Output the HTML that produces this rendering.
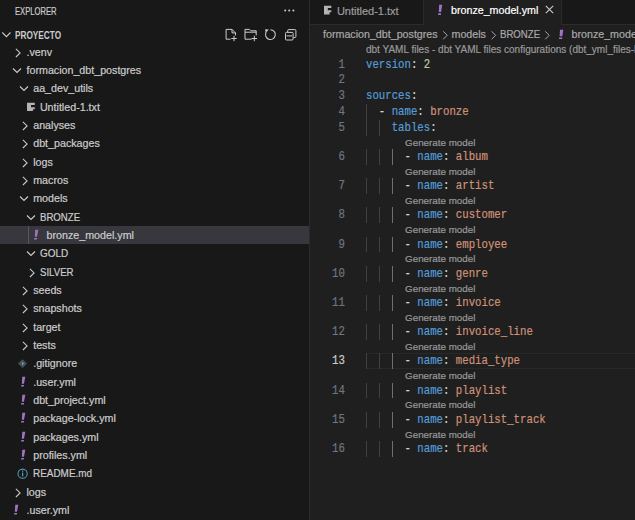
<!DOCTYPE html>
<html><head><meta charset="utf-8">
<style>
*{margin:0;padding:0;box-sizing:border-box}
html,body{width:635px;height:520px;overflow:hidden;background:#1f1f1f;font-family:"Liberation Sans",sans-serif;}
.lbl,.tabtxt,#bc,.bct,.title,.lens,.code,.ln{-webkit-text-stroke:0.2px currentColor}
.abs{position:absolute}
#side{position:absolute;left:0;top:0;width:309px;height:520px;background:#181818;}
#sideb{position:absolute;left:309px;top:0;width:1px;height:520px;background:#2b2b2b;}
.title{position:absolute;left:14.9px;top:4.6px;font-size:10.3px;color:#cccccc;line-height:14px;transform:scaleX(0.74);transform-origin:0 0}
.hdr{position:absolute;left:15px;top:28.7px;font-size:10.3px;font-weight:bold;color:#cccccc;line-height:14px;transform:scaleX(0.80);transform-origin:0 0}
.row{position:absolute;left:0;width:309px;height:18.33px;}
.row.sel{background:#37373d}
.lbl{position:absolute;top:0;font-size:10.7px;line-height:18.33px;color:#cccccc;white-space:nowrap}
.ic{position:absolute;top:0}
.bang{position:absolute;top:0;width:6px;text-align:center;font-size:11px;line-height:18.33px;font-weight:bold;font-style:italic;color:#a074c4}
.tguide{position:absolute;left:28px;top:0;width:1px;height:18.33px;background:#585858}
#tabs{position:absolute;left:310px;top:0;width:325px;height:24px;background:#181818;}
#tabsb{position:absolute;left:310px;top:24px;width:325px;height:1px;background:#2b2b2b;}
.tab{position:absolute;top:0;height:24px;}
.tabtxt{position:absolute;top:0;font-size:10.7px;line-height:21px;white-space:nowrap}
#bc,.bct{position:absolute;left:323px;top:25px;font-size:10.7px;line-height:18px;color:#a9a9a9;white-space:nowrap}
.lens{position:absolute;font-size:9.8px;line-height:13.36px;color:#999999;white-space:nowrap}
.ln{position:absolute;left:310px;width:34.8px;text-align:right;font-family:"Liberation Mono",monospace;font-size:11.85px;line-height:15.83px;color:#6e7681;transform:translateY(1px) scaleX(0.903);transform-origin:100% 0}
.ln.act{color:#cccccc}
.code{position:absolute;left:366.4px;font-family:"Liberation Mono",monospace;font-size:11.85px;line-height:15.83px;white-space:pre;color:#d4d4d4;transform:translateY(1px) scaleX(0.903);transform-origin:0 0}
.k{color:#569cd6} .s{color:#ce9178} .n{color:#b5cea8} .p{color:#d4d4d4}
.ig{position:absolute;width:1px;height:15.83px;background:#404040}
.ig.a{background:#707070}
.hl{position:absolute;left:366px;width:270px;height:15.83px;border:1px solid #282828;border-right:none}
</style></head><body>
<div id="side">
 <div class="title">EXPLORER</div>
 <svg class="abs" style="left:283px;top:8px" width="13" height="5" viewBox="0 0 13 5"><circle cx="2.2" cy="2.4" r="1" fill="#cccccc"/><circle cx="6.2" cy="2.4" r="1" fill="#cccccc"/><circle cx="10.4" cy="2.4" r="1" fill="#cccccc"/></svg>
 <svg class="abs" style="left:2px;top:30px" width="10" height="9" viewBox="0 0 10 9"><path d="M0.3 2.5 L4.4 6.6 L8.5 2.5" fill="none" stroke="#cccccc" stroke-width="1.1"/></svg>
 <div class="hdr">PROYECTO</div>
 <!-- action icons -->
 <svg class="abs" style="left:222px;top:25px" width="76" height="19" viewBox="0 0 76 19" fill="none" stroke="#cccccc" stroke-width="1">
   <path d="M8.6 14.2H4.1V4.4H10L13.5 7.9V10.4"/><path d="M10 4.4V7.9H13.5"/><path d="M12 10.8V16.2M9.3 13.5H14.7"/>
   <path d="M29.6 14.2H23V4.4H27.6L29 5.8H34.2V10.4"/><path d="M23 7.2H34.2"/><path d="M32.3 10.8V16.2M29.6 13.5H35"/>
   <path d="M10.4 4.7A4.9 4.9 0 1 1 6.16 7.15" transform="translate(38,0)" stroke-width="1.05"/>
   <path d="M43.2 4.3L46.8 4.6L43.6 7.9z" fill="#cccccc" stroke="none"/>
   <path d="M65.7 7.1V5.6A1 1 0 0 1 66.7 4.6H72.9A1 1 0 0 1 73.9 5.6V11.5A1 1 0 0 1 72.9 12.5H71.3"/>
   <rect x="63.5" y="7.4" width="7.6" height="7.6" rx="1"/><path d="M64.5 10.9H70.1"/>
 </svg>
<div class="row" style="top:42.80px"><svg class="ic" style="left:14.10px" width="8" height="18" viewBox="0 0 8 18"><path d="M1.9 5.9 L6.1 9.95 L1.9 14.0" fill="none" stroke="#cccccc" stroke-width="1.05"/></svg><span class="lbl" style="left:26.50px">.venv</span></div>
<div class="row" style="top:61.13px"><svg class="ic" style="left:12.40px" width="10" height="18" viewBox="0 0 10 18"><path d="M1 7.5 L5 11.5 L9 7.5" fill="none" stroke="#cccccc" stroke-width="1.1"/></svg><span class="lbl" style="left:26.50px">formacion_dbt_postgres</span></div>
<div class="row" style="top:79.46px"><svg class="ic" style="left:19.10px" width="10" height="18" viewBox="0 0 10 18"><path d="M1 7.5 L5 11.5 L9 7.5" fill="none" stroke="#cccccc" stroke-width="1.1"/></svg><span class="lbl" style="left:33.20px">aa_dev_utils</span></div>
<div class="row" style="top:97.79px"><svg class="ic" style="left:27.1px" width="8" height="18" viewBox="0 0 8 18"><path d="M0 4.8H7.8V6.9H4V9.2H7.8V11.2H5.9V13H0z" fill="#b4b4b4"/></svg><span class="lbl" style="left:39.90px">Untitled-1.txt</span></div>
<div class="row" style="top:116.12px"><svg class="ic" style="left:20.80px" width="8" height="18" viewBox="0 0 8 18"><path d="M1.9 5.9 L6.1 9.95 L1.9 14.0" fill="none" stroke="#cccccc" stroke-width="1.05"/></svg><span class="lbl" style="left:33.20px">analyses</span></div>
<div class="row" style="top:134.45px"><svg class="ic" style="left:20.80px" width="8" height="18" viewBox="0 0 8 18"><path d="M1.9 5.9 L6.1 9.95 L1.9 14.0" fill="none" stroke="#cccccc" stroke-width="1.05"/></svg><span class="lbl" style="left:33.20px">dbt_packages</span></div>
<div class="row" style="top:152.78px"><svg class="ic" style="left:20.80px" width="8" height="18" viewBox="0 0 8 18"><path d="M1.9 5.9 L6.1 9.95 L1.9 14.0" fill="none" stroke="#cccccc" stroke-width="1.05"/></svg><span class="lbl" style="left:33.20px">logs</span></div>
<div class="row" style="top:171.11px"><svg class="ic" style="left:20.80px" width="8" height="18" viewBox="0 0 8 18"><path d="M1.9 5.9 L6.1 9.95 L1.9 14.0" fill="none" stroke="#cccccc" stroke-width="1.05"/></svg><span class="lbl" style="left:33.20px">macros</span></div>
<div class="row" style="top:189.44px"><svg class="ic" style="left:19.10px" width="10" height="18" viewBox="0 0 10 18"><path d="M1 7.5 L5 11.5 L9 7.5" fill="none" stroke="#cccccc" stroke-width="1.1"/></svg><span class="lbl" style="left:33.20px">models</span></div>
<div class="row" style="top:207.77px"><svg class="ic" style="left:25.80px" width="10" height="18" viewBox="0 0 10 18"><path d="M1 7.5 L5 11.5 L9 7.5" fill="none" stroke="#cccccc" stroke-width="1.1"/></svg><span class="lbl" style="left:39.90px;transform:scaleX(0.9);transform-origin:0 0">BRONZE</span></div>
<div class="row sel" style="top:226.10px"><div class="tguide"></div><svg class="ic" style="left:34.00px" width="6" height="18" viewBox="0 0 6 18"><path d="M1.3 3.7H4.3L3.0 10.7H0.8z" fill="#a074c4"/><path d="M0.3 11.9H3.1L2.8 13.6H0.0z" fill="#a074c4"/></svg><span class="lbl" style="left:46.60px">bronze_model.yml</span></div>
<div class="row" style="top:244.43px"><svg class="ic" style="left:25.80px" width="10" height="18" viewBox="0 0 10 18"><path d="M1 7.5 L5 11.5 L9 7.5" fill="none" stroke="#cccccc" stroke-width="1.1"/></svg><span class="lbl" style="left:39.90px;transform:scaleX(0.93);transform-origin:0 0">GOLD</span></div>
<div class="row" style="top:262.76px"><svg class="ic" style="left:27.50px" width="8" height="18" viewBox="0 0 8 18"><path d="M1.9 5.9 L6.1 9.95 L1.9 14.0" fill="none" stroke="#cccccc" stroke-width="1.05"/></svg><span class="lbl" style="left:39.90px;transform:scaleX(0.9);transform-origin:0 0">SILVER</span></div>
<div class="row" style="top:281.09px"><svg class="ic" style="left:20.80px" width="8" height="18" viewBox="0 0 8 18"><path d="M1.9 5.9 L6.1 9.95 L1.9 14.0" fill="none" stroke="#cccccc" stroke-width="1.05"/></svg><span class="lbl" style="left:33.20px">seeds</span></div>
<div class="row" style="top:299.42px"><svg class="ic" style="left:20.80px" width="8" height="18" viewBox="0 0 8 18"><path d="M1.9 5.9 L6.1 9.95 L1.9 14.0" fill="none" stroke="#cccccc" stroke-width="1.05"/></svg><span class="lbl" style="left:33.20px">snapshots</span></div>
<div class="row" style="top:317.75px"><svg class="ic" style="left:20.80px" width="8" height="18" viewBox="0 0 8 18"><path d="M1.9 5.9 L6.1 9.95 L1.9 14.0" fill="none" stroke="#cccccc" stroke-width="1.05"/></svg><span class="lbl" style="left:33.20px">target</span></div>
<div class="row" style="top:336.08px"><svg class="ic" style="left:20.80px" width="8" height="18" viewBox="0 0 8 18"><path d="M1.9 5.9 L6.1 9.95 L1.9 14.0" fill="none" stroke="#cccccc" stroke-width="1.05"/></svg><span class="lbl" style="left:33.20px">tests</span></div>
<div class="row" style="top:354.41px"><svg class="ic" style="left:18px" width="10" height="18" viewBox="0 0 10 18"><path d="M4.5 5.2 L9.1 9.6 L4.5 14 L0 9.6z" fill="#41535b"/><path d="M4 7.8 L6 9.6 L4 11.4z" fill="#8a989e"/></svg><span class="lbl" style="left:33.20px">.gitignore</span></div>
<div class="row" style="top:372.74px"><svg class="ic" style="left:20.60px" width="6" height="18" viewBox="0 0 6 18"><path d="M1.3 3.7H4.3L3.0 10.7H0.8z" fill="#a074c4"/><path d="M0.3 11.9H3.1L2.8 13.6H0.0z" fill="#a074c4"/></svg><span class="lbl" style="left:33.20px">.user.yml</span></div>
<div class="row" style="top:391.07px"><svg class="ic" style="left:20.60px" width="6" height="18" viewBox="0 0 6 18"><path d="M1.3 3.7H4.3L3.0 10.7H0.8z" fill="#a074c4"/><path d="M0.3 11.9H3.1L2.8 13.6H0.0z" fill="#a074c4"/></svg><span class="lbl" style="left:33.20px">dbt_project.yml</span></div>
<div class="row" style="top:409.40px"><svg class="ic" style="left:20.60px" width="6" height="18" viewBox="0 0 6 18"><path d="M1.3 3.7H4.3L3.0 10.7H0.8z" fill="#a074c4"/><path d="M0.3 11.9H3.1L2.8 13.6H0.0z" fill="#a074c4"/></svg><span class="lbl" style="left:33.20px">package-lock.yml</span></div>
<div class="row" style="top:427.73px"><svg class="ic" style="left:20.60px" width="6" height="18" viewBox="0 0 6 18"><path d="M1.3 3.7H4.3L3.0 10.7H0.8z" fill="#a074c4"/><path d="M0.3 11.9H3.1L2.8 13.6H0.0z" fill="#a074c4"/></svg><span class="lbl" style="left:33.20px">packages.yml</span></div>
<div class="row" style="top:446.06px"><svg class="ic" style="left:20.60px" width="6" height="18" viewBox="0 0 6 18"><path d="M1.3 3.7H4.3L3.0 10.7H0.8z" fill="#a074c4"/><path d="M0.3 11.9H3.1L2.8 13.6H0.0z" fill="#a074c4"/></svg><span class="lbl" style="left:33.20px">profiles.yml</span></div>
<div class="row" style="top:464.39px"><svg class="ic" style="left:17px" width="12" height="18" viewBox="0 0 12 18"><circle cx="5.6" cy="9.7" r="4.6" fill="none" stroke="#519aba" stroke-width="1.05"/><rect x="5.0" y="8.5" width="1.25" height="3.9" fill="#519aba"/><rect x="5.0" y="6.5" width="1.25" height="1.2" fill="#519aba"/></svg><span class="lbl" style="left:33.20px;transform:scaleX(0.93);transform-origin:0 0">README.md</span></div>
<div class="row" style="top:482.72px"><svg class="ic" style="left:14.10px" width="8" height="18" viewBox="0 0 8 18"><path d="M1.9 5.9 L6.1 9.95 L1.9 14.0" fill="none" stroke="#cccccc" stroke-width="1.05"/></svg><span class="lbl" style="left:26.50px">logs</span></div>
<div class="row" style="top:501.05px"><svg class="ic" style="left:13.90px" width="6" height="18" viewBox="0 0 6 18"><path d="M1.3 3.7H4.3L3.0 10.7H0.8z" fill="#a074c4"/><path d="M0.3 11.9H3.1L2.8 13.6H0.0z" fill="#a074c4"/></svg><span class="lbl" style="left:26.50px">.user.yml</span></div>
</div>
<div id="sideb"></div>
<div id="tabs"></div>
<div id="tabsb"></div>
<div class="tab" style="left:310px;width:113px;"></div>
<div class="abs" style="left:423px;top:0;width:1px;height:24px;background:#2b2b2b"></div>
<svg class="abs" style="left:324px;top:1px" width="8" height="18" viewBox="0 0 8 18"><path d="M0 4.8H7.3V6.9H3.8V9.2H7.3V11.2H5.5V13.6H0z" fill="#b4b4b4"/></svg>
<div class="tabtxt" style="left:336.9px;top:0.7px;color:#9d9d9d;font-size:11px">Untitled-1.txt</div>
<div class="abs" style="left:424px;top:0;width:137px;height:25px;background:#1f1f1f"></div>
<div class="abs" style="left:561px;top:0;width:1px;height:24px;background:#2b2b2b"></div>
<svg class="abs" style="left:437.8px;top:0px" width="6" height="18" viewBox="0 0 6 18"><path d="M1.2 4.8H4.2L3.1 12.0H0.8z" fill="#a074c4"/><path d="M0.3 13.3H3.1L2.9 15.0H0.1z" fill="#a074c4"/></svg>
<div class="tabtxt" style="left:451px;color:#ffffff">bronze_model.yml</div>
<svg class="abs" style="left:545.2px;top:5.4px" width="9" height="9" viewBox="0 0 9 9"><path d="M0.8 0.8L8.2 8.2M8.2 0.8L0.8 8.2" stroke="#cccccc" stroke-width="1.1"/></svg>
<div id="bc">formacion_dbt_postgres</div>
<div class="bct" style="left:451.5px">models</div>
<div class="bct" style="left:499.7px;transform:scaleX(0.9);transform-origin:0 0">BRONZE</div>
<div class="bct" style="left:571.5px">bronze_model.yml</div>
<svg class="abs" style="left:440px;top:28px" width="60" height="14" viewBox="0 0 60 14" fill="none" stroke="#a9a9a9" stroke-width="1"><path d="M3.2 3.3L7.2 7.3L3.2 11.3"/><path d="M51.6 3.3L55.6 7.3L51.6 11.3"/></svg>
<svg class="abs" style="left:542px;top:28px" width="10" height="14" viewBox="0 0 10 14" fill="none" stroke="#a9a9a9" stroke-width="1"><path d="M3.2 3.3L7.2 7.3L3.2 11.3"/></svg>
<svg class="abs" style="left:558.6px;top:25px" width="6" height="18" viewBox="0 0 6 18"><path d="M1.0 4.7H4.3L3.3 11.2H0.6z" fill="#a074c4"/><path d="M0.1 12.4H3.3L3.1 14H0z" fill="#a074c4"/></svg>
<div class="lens" style="top:43.3px;left:366px;font-size:10px">dbt YAML files - dbt YAML files configurations (dbt_yml_files-bronze)</div>
<div class="ln" style="top:56.50px">1</div>
<div class="code" style="top:56.50px"><span class="k">version</span><span class="p">:&nbsp;</span><span class="n">2</span></div>
<div class="ln" style="top:72.33px">2</div>
<div class="code" style="top:72.33px"></div>
<div class="ln" style="top:88.16px">3</div>
<div class="code" style="top:88.16px"><span class="k">sources</span><span class="p">:</span></div>
<div class="ln" style="top:103.99px">4</div>
<div class="ig" style="top:103.99px;left:366.40px"></div>
<div class="code" style="top:103.99px"><span class="p">&nbsp;&nbsp;-&nbsp;</span><span class="k">name</span><span class="p">:&nbsp;</span><span class="s">bronze</span></div>
<div class="ln" style="top:119.82px">5</div>
<div class="ig" style="top:119.82px;left:366.40px"></div>
<div class="ig" style="top:119.82px;left:379.30px"></div>
<div class="code" style="top:119.82px"><span class="p">&nbsp;&nbsp;&nbsp;&nbsp;</span><span class="k">tables</span><span class="p">:</span></div>
<div class="lens" style="top:135.65px;left:405.10px">Generate model</div>
<div class="ln" style="top:149.01px">6</div>
<div class="ig" style="top:149.01px;left:366.40px"></div>
<div class="ig" style="top:149.01px;left:379.30px"></div>
<div class="ig a" style="top:149.01px;left:392.20px"></div>
<div class="code" style="top:149.01px"><span class="p">&nbsp;&nbsp;&nbsp;&nbsp;&nbsp;&nbsp;-&nbsp;</span><span class="k">name</span><span class="p">:&nbsp;</span><span class="s">album</span></div>
<div class="lens" style="top:164.84px;left:405.10px">Generate model</div>
<div class="ln" style="top:178.20px">7</div>
<div class="ig" style="top:178.20px;left:366.40px"></div>
<div class="ig" style="top:178.20px;left:379.30px"></div>
<div class="ig a" style="top:178.20px;left:392.20px"></div>
<div class="code" style="top:178.20px"><span class="p">&nbsp;&nbsp;&nbsp;&nbsp;&nbsp;&nbsp;-&nbsp;</span><span class="k">name</span><span class="p">:&nbsp;</span><span class="s">artist</span></div>
<div class="lens" style="top:194.03px;left:405.10px">Generate model</div>
<div class="ln" style="top:207.39px">8</div>
<div class="ig" style="top:207.39px;left:366.40px"></div>
<div class="ig" style="top:207.39px;left:379.30px"></div>
<div class="ig a" style="top:207.39px;left:392.20px"></div>
<div class="code" style="top:207.39px"><span class="p">&nbsp;&nbsp;&nbsp;&nbsp;&nbsp;&nbsp;-&nbsp;</span><span class="k">name</span><span class="p">:&nbsp;</span><span class="s">customer</span></div>
<div class="lens" style="top:223.22px;left:405.10px">Generate model</div>
<div class="ln" style="top:236.58px">9</div>
<div class="ig" style="top:236.58px;left:366.40px"></div>
<div class="ig" style="top:236.58px;left:379.30px"></div>
<div class="ig a" style="top:236.58px;left:392.20px"></div>
<div class="code" style="top:236.58px"><span class="p">&nbsp;&nbsp;&nbsp;&nbsp;&nbsp;&nbsp;-&nbsp;</span><span class="k">name</span><span class="p">:&nbsp;</span><span class="s">employee</span></div>
<div class="lens" style="top:252.41px;left:405.10px">Generate model</div>
<div class="ln" style="top:265.77px">10</div>
<div class="ig" style="top:265.77px;left:366.40px"></div>
<div class="ig" style="top:265.77px;left:379.30px"></div>
<div class="ig a" style="top:265.77px;left:392.20px"></div>
<div class="code" style="top:265.77px"><span class="p">&nbsp;&nbsp;&nbsp;&nbsp;&nbsp;&nbsp;-&nbsp;</span><span class="k">name</span><span class="p">:&nbsp;</span><span class="s">genre</span></div>
<div class="lens" style="top:281.60px;left:405.10px">Generate model</div>
<div class="ln" style="top:294.96px">11</div>
<div class="ig" style="top:294.96px;left:366.40px"></div>
<div class="ig" style="top:294.96px;left:379.30px"></div>
<div class="ig a" style="top:294.96px;left:392.20px"></div>
<div class="code" style="top:294.96px"><span class="p">&nbsp;&nbsp;&nbsp;&nbsp;&nbsp;&nbsp;-&nbsp;</span><span class="k">name</span><span class="p">:&nbsp;</span><span class="s">invoice</span></div>
<div class="lens" style="top:310.79px;left:405.10px">Generate model</div>
<div class="ln" style="top:324.15px">12</div>
<div class="ig" style="top:324.15px;left:366.40px"></div>
<div class="ig" style="top:324.15px;left:379.30px"></div>
<div class="ig a" style="top:324.15px;left:392.20px"></div>
<div class="code" style="top:324.15px"><span class="p">&nbsp;&nbsp;&nbsp;&nbsp;&nbsp;&nbsp;-&nbsp;</span><span class="k">name</span><span class="p">:&nbsp;</span><span class="s">invoice_line</span></div>
<div class="lens" style="top:339.98px;left:405.10px">Generate model</div>
<div class="hl" style="top:353.34px"></div>
<div class="ln act" style="top:353.34px">13</div>
<div class="ig" style="top:353.34px;left:366.40px"></div>
<div class="ig" style="top:353.34px;left:379.30px"></div>
<div class="ig a" style="top:353.34px;left:392.20px"></div>
<div class="code" style="top:353.34px"><span class="p">&nbsp;&nbsp;&nbsp;&nbsp;&nbsp;&nbsp;-&nbsp;</span><span class="k">name</span><span class="p">:&nbsp;</span><span class="s">media_type</span></div>
<div class="lens" style="top:369.17px;left:405.10px">Generate model</div>
<div class="ln" style="top:382.53px">14</div>
<div class="ig" style="top:382.53px;left:366.40px"></div>
<div class="ig" style="top:382.53px;left:379.30px"></div>
<div class="ig a" style="top:382.53px;left:392.20px"></div>
<div class="code" style="top:382.53px"><span class="p">&nbsp;&nbsp;&nbsp;&nbsp;&nbsp;&nbsp;-&nbsp;</span><span class="k">name</span><span class="p">:&nbsp;</span><span class="s">playlist</span></div>
<div class="lens" style="top:398.36px;left:405.10px">Generate model</div>
<div class="ln" style="top:411.72px">15</div>
<div class="ig" style="top:411.72px;left:366.40px"></div>
<div class="ig" style="top:411.72px;left:379.30px"></div>
<div class="ig a" style="top:411.72px;left:392.20px"></div>
<div class="code" style="top:411.72px"><span class="p">&nbsp;&nbsp;&nbsp;&nbsp;&nbsp;&nbsp;-&nbsp;</span><span class="k">name</span><span class="p">:&nbsp;</span><span class="s">playlist_track</span></div>
<div class="lens" style="top:427.55px;left:405.10px">Generate model</div>
<div class="ln" style="top:440.91px">16</div>
<div class="ig" style="top:440.91px;left:366.40px"></div>
<div class="ig" style="top:440.91px;left:379.30px"></div>
<div class="ig a" style="top:440.91px;left:392.20px"></div>
<div class="code" style="top:440.91px"><span class="p">&nbsp;&nbsp;&nbsp;&nbsp;&nbsp;&nbsp;-&nbsp;</span><span class="k">name</span><span class="p">:&nbsp;</span><span class="s">track</span></div>
</body></html>
